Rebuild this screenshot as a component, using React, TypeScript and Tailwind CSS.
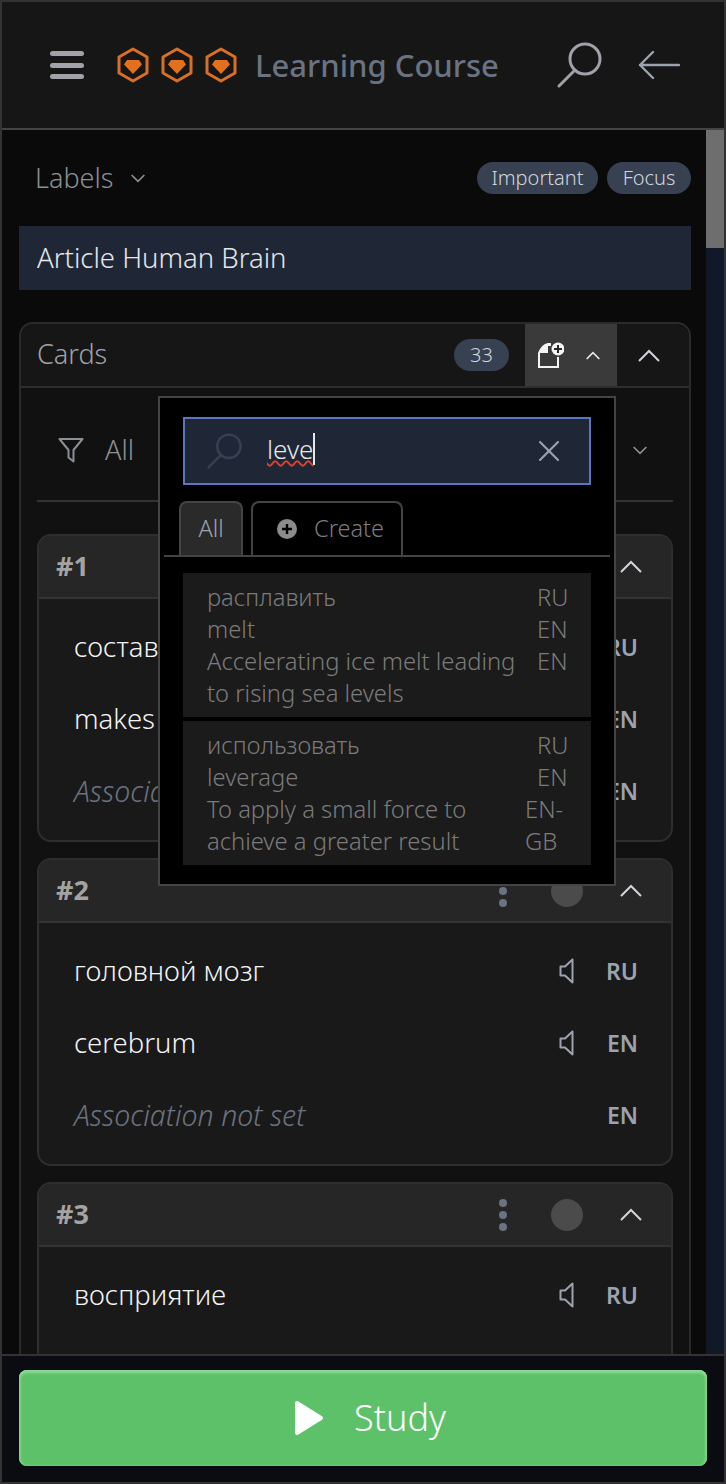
import { X } from "lucide-react";

const FONT = "font-['Noto_Sans',sans-serif]";

const HexIcon = () => (
  <svg width="34" height="36" viewBox="0 0 34 36" fill="none">
    <path d="M17 2 L31 10 V26 L17 34 L3 26 V10 Z" stroke="#d96f24" strokeWidth="3" strokeLinejoin="round" />
    <path d="M11 13 H23 L26 17.5 L17 27 L8 17.5 Z" fill="#e2711d" />
  </svg>
);

const SearchIcon = ({ color, size }: { color: string; size: number }) => (
  <svg width={size} height={size} viewBox="0 0 46 46" fill="none">
    <circle cx="28" cy="17" r="15" stroke={color} strokeWidth="3" />
    <path d="M18 28 L2 44" stroke={color} strokeWidth="3" strokeLinecap="round" />
  </svg>
);

const Chevron = ({ up, width, color }: { up?: boolean; width: number; color: string }) => (
  <svg
    width={width}
    height={width / 2 + 2}
    viewBox="0 0 22 13"
    fill="none"
    className={up ? "shrink-0" : "shrink-0 rotate-180"}
  >
    <path d="M1 12 L11 2 L21 12" stroke={color} strokeWidth={up && width > 20 ? 2 : 2.6} />
  </svg>
);

const SpeakerIcon = () => (
  <svg width="15" height="26" viewBox="0 0 15 26" fill="none" className="shrink-0">
    <path d="M13.5 1.5 V24.5 L6 17.5 H1.5 V8.5 H6 Z" stroke="#9ca3af" strokeWidth="2" strokeLinejoin="round" />
  </svg>
);

const FilterIcon = () => (
  <svg width="26" height="26" viewBox="0 0 26 26" fill="none" className="shrink-0">
    <path d="M1.5 2 H24.5 L15.5 13 V24.5 L10.5 20.5 V13 Z" stroke="#8b8f96" strokeWidth="2" strokeLinejoin="round" />
  </svg>
);

const AddCardIcon = () => (
  <svg width="26" height="26" viewBox="0 0 26 26" fill="none" className="shrink-0">
    <path d="M1 11 V25 H20 V15" stroke="#f3f4f6" strokeWidth="2" />
    <path d="M0 11 C2 6 5 2 10 1 H13 V4 H10 V11 Z" fill="#f3f4f6" />
    <circle cx="20" cy="7" r="6.5" fill="#f3f4f6" />
    <path d="M20 3 V11 M16 7 H24" stroke="#2a2a2a" strokeWidth="2" />
  </svg>
);

const Row = ({ text, lang, muted }: { text: string; lang: string; muted?: boolean }) => (
  <div className="flex items-center h-[72px] pl-[35px] pr-[33px]">
    <span
      className={
        muted
          ? "flex-1 text-[28.5px] italic font-light text-[#6b7280] whitespace-nowrap"
          : "flex-1 text-[27.5px] font-light text-[#f3f4f6] whitespace-nowrap"
      }
    >
      {text}
    </span>
    {!muted && <SpeakerIcon />}
    <span className="w-[64px] text-right text-[23px] font-semibold text-[#9ca3af]">{lang}</span>
  </div>
);

const Card = ({ id, rows }: { id: string; rows: { text: string; lang: string; muted?: boolean }[] }) => (
  <div className="border-2 border-[#2e2e2e] rounded-[14px] overflow-hidden shrink-0 bg-[#191919]">
    <div className="flex items-center h-[63px] bg-[#262626] border-b-2 border-[#333333] pl-[17px] pr-[29px]">
      <span className="flex-1 text-[27px] font-bold text-[#a3a3a3]">{id}</span>
      <span className="flex flex-col gap-[4px] mr-[44px]">
        <span className="w-[8px] h-[8px] rounded-full bg-[#6b7280]" />
        <span className="w-[8px] h-[8px] rounded-full bg-[#6b7280]" />
        <span className="w-[8px] h-[8px] rounded-full bg-[#6b7280]" />
      </span>
      <span className="w-[32px] h-[32px] rounded-full bg-[#4b4b4b] mr-[37px]" />
      <Chevron up width={22} color="#d1d5db" />
    </div>
    <div className="pt-[12px] pb-[13px]">
      {rows.map((r) => (
        <Row key={r.text} {...r} />
      ))}
    </div>
  </div>
);

const Result = ({ rows }: { rows: [string, string][] }) => (
  <div className="bg-[#1b1b1b] px-[24px] py-[8px]">
    {rows.map(([text, lang], i) => (
      <div key={i} className="flex justify-between text-[23.75px] leading-[32px] font-light text-[#7b7b7b]">
        <span className="whitespace-nowrap">{text}</span>
        <span className={lang === "EN-" || lang === "GB" ? "w-[42px]" : "w-[30px]"}>{lang}</span>
      </div>
    ))}
  </div>
);

export default function App() {
  return (
    <div className={`${FONT} w-[726px] h-[1484px] flex flex-col overflow-hidden bg-[#0a0a0a] border-2 border-[#333333]`}>
      <header className="h-[128px] shrink-0 flex items-center bg-[#161616] border-b-2 border-[#444444] pl-[48px] pr-[44px]">
        <div className="flex flex-col gap-[6.5px] w-[34px] mr-[32px]">
          <span className="h-[5px] rounded-full bg-[#a1a1aa]" />
          <span className="h-[5px] rounded-full bg-[#a1a1aa]" />
          <span className="h-[5px] rounded-full bg-[#a1a1aa]" />
        </div>
        <div className="flex gap-[10px] mr-[17px]">
          <HexIcon />
          <HexIcon />
          <HexIcon />
        </div>
        <span className="flex-1 text-[31px] font-medium text-[#6b7280]">Learning Course</span>
        <div className="mr-[35px]">
          <SearchIcon color="#a1a1aa" size={46} />
        </div>
        <svg width="42" height="30" viewBox="0 0 42 30" fill="none">
          <path d="M41 15 H2 M15 2 L2 15 L15 28" stroke="#9ca3af" strokeWidth="2.4" strokeLinecap="round" strokeLinejoin="round" />
        </svg>
      </header>

      <div className="flex-1 flex min-h-0">
        <main className="flex-1 min-w-0 pl-[17px] pr-[15px] overflow-hidden">
          <div className="flex items-center h-[96px] pl-[16px]">
            <span className="text-[27px] font-light text-[#8b8f96]">Labels</span>
            <span className="ml-[18px]">
              <Chevron width={14} color="#8b8f96" />
            </span>
            <span className="ml-auto w-[121px] h-[32px] flex items-center justify-center rounded-full bg-[#374151] text-[20px] font-light text-[#d1d5db]">
              Important
            </span>
            <span className="ml-[9px] w-[84px] h-[32px] flex items-center justify-center rounded-full bg-[#374151] text-[20px] font-light text-[#d1d5db]">
              Focus
            </span>
          </div>
          <div className="h-[64px] flex items-center pl-[18px] bg-[#1f2737] text-[27.5px] font-light text-[#e5e7eb]">
            Article Human Brain
          </div>

          <section className="relative mt-[32px] border-2 border-b-0 border-[#2a2a2a] rounded-t-[14px] bg-[#111111]">
            <div className="flex items-center h-[64px] bg-[#161616] rounded-t-[14px] border-b-2 border-[#2e2e2e] pl-[16px]">
              <span className="flex-1 text-[27px] font-light text-[#a1a1aa] -translate-y-px">Cards</span>
              <span className="w-[55px] h-[32px] rounded-full bg-[#374151] flex items-center justify-center text-[20px] font-light text-[#d1d5db] mr-[16px]">
                33
              </span>
              <div className="w-[92px] h-[62px] bg-[#3a3a3a] flex items-center pl-[13px]">
                <AddCardIcon />
                <span className="ml-[22px]">
                  <Chevron up width={14} color="#e5e7eb" />
                </span>
              </div>
              <div className="w-[72px] pr-[8px] flex justify-center">
                <Chevron up width={22} color="#d1d5db" />
              </div>
            </div>

            <div className="px-[16px]">
              <div className="flex items-center h-[114px] border-b-2 border-[#333333] pl-[21px] pr-[26px] pt-[12px]">
                <FilterIcon />
                <span className="ml-[21px] text-[27px] font-light text-[#8b8f96]">All</span>
                <span className="ml-[24px]">
                  <Chevron width={14} color="#8b8f96" />
                </span>
                <span className="ml-auto">
                  <Chevron width={14} color="#8b8f96" />
                </span>
              </div>
              <div className="flex flex-col gap-[16px] mt-[32px]">
                <Card
                  id="#1"
                  rows={[
                    { text: "составляет", lang: "RU" },
                    { text: "makes up", lang: "EN" },
                    { text: "Association not set", lang: "EN", muted: true },
                  ]}
                />
                <Card
                  id="#2"
                  rows={[
                    { text: "головной мозг", lang: "RU" },
                    { text: "cerebrum", lang: "EN" },
                    { text: "Association not set", lang: "EN", muted: true },
                  ]}
                />
                <Card
                  id="#3"
                  rows={[
                    { text: "восприятие", lang: "RU" },
                    { text: "perception", lang: "EN" },
                    { text: "Association not set", lang: "EN", muted: true },
                  ]}
                />
              </div>
            </div>

            {/* search popup */}
            <div className="absolute left-[137px] top-[72px] w-[458px] h-[490px] bg-black border-2 border-[#444444] pt-[19px]">
              <div className="mx-[23px] h-[68px] flex items-center border-2 border-[#5b75c0] bg-[#1f2737] pl-[22px] pr-[22px]">
                <SearchIcon color="#374151" size={36} />
                <span className="ml-[24px] -translate-y-[2px] text-[26px] font-light text-[#e5e7eb] border-r-2 border-[#e5e7eb] leading-[32px]">
                  <span className="underline decoration-wavy decoration-[#d9432f] decoration-2">leve</span>
                </span>
                <X size={36} strokeWidth={1.4} color="#9ca3af" className="ml-auto" />
              </div>
              <div className="flex gap-[8px] mt-[16px] mx-[4px] border-b-2 border-[#444444] pl-[15px] h-[56px]">
                <div className="w-[64px] border-2 border-b-0 border-[#444444] rounded-t-[8px] bg-[#2a2a2a] flex items-center justify-center text-[23.5px] font-light text-[#9ca3af]">
                  All
                </div>
                <div className="w-[152px] border-2 border-b-0 border-[#444444] rounded-t-[8px] flex items-center pl-[24px] gap-[17px] text-[23.5px] font-light text-[#7b7b7b]">
                  <span className="w-[20px] h-[20px] rounded-full bg-[#8b8b8b] flex items-center justify-center">
                    <svg width="12" height="12" viewBox="0 0 12 12">
                      <path d="M6 1 V11 M1 6 H11" stroke="#000" strokeWidth="2.4" />
                    </svg>
                  </span>
                  Create
                </div>
              </div>
              <div className="mx-[23px] mt-[16px] flex flex-col gap-[4px]">
                <Result
                  rows={[
                    ["расплавить", "RU"],
                    ["melt", "EN"],
                    ["Accelerating ice melt leading", "EN"],
                    ["to rising sea levels", ""],
                  ]}
                />
                <Result
                  rows={[
                    ["использовать", "RU"],
                    ["leverage", "EN"],
                    ["To apply a small force to", "EN-"],
                    ["achieve a greater result", "GB"],
                  ]}
                />
              </div>
            </div>
          </section>
        </main>

        <div className="w-[18px] shrink-0 bg-[#111827]">
          <div className="h-[118px] bg-[#6e6e6e]" />
        </div>
      </div>

      <footer className="h-[128px] shrink-0 bg-[#0a0c12] border-t-2 border-[#333333] pl-[17px] pr-[17px] pt-[14px]">
        <button className="w-full h-[96px] rounded-[8px] bg-[#5cc168] shadow-[inset_0_3px_3px_#8fd89a,inset_2px_0_2px_#7ad085,inset_-2px_0_2px_#7ad085] flex items-center justify-center gap-[30px] pl-[14px] text-[36px] font-light text-white">
          <svg width="30" height="36" viewBox="0 0 30 36">
            <path d="M3 3 L27 18 L3 33 Z" fill="#fff" stroke="#fff" strokeWidth="4" strokeLinejoin="round" />
          </svg>
          Study
        </button>
      </footer>
    </div>
  );
}
